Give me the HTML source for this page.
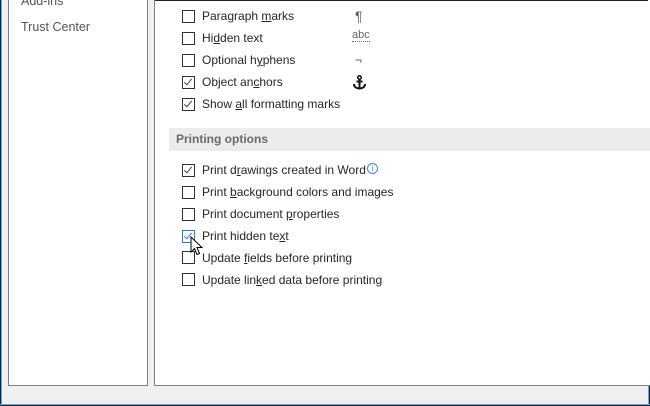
<!DOCTYPE html>
<html><head><style>
body{margin:0;width:650px;height:406px;overflow:hidden;background:#f0f0f0;position:relative;font-family:"Liberation Sans",sans-serif;font-size:12px;color:#262626}
.b{position:absolute}
.cb{position:absolute;left:182px;width:11px;height:11px;border:1px solid #333;background:#fff}
.cb.c::after{content:"";position:absolute;left:3px;top:0px;width:3px;height:7px;border:solid #444;border-width:0 1.3px 1.3px 0;transform:rotate(40deg)}
.cb.blue{border-color:#2a7fd4}
.cb.blue::after{border-color:#2a7fd4}
.t{position:absolute;left:202px;line-height:14px}
u{text-decoration:underline}
</style></head><body>
<div class="b" style="left:0;top:0;width:1px;height:406px;background:#222"></div>
<div class="b" style="left:1px;top:0;width:1px;height:405px;background:#5aaaf0"></div>
<div class="b" style="left:648px;top:0;width:1px;height:405px;background:#5aaaf0"></div>
<div class="b" style="left:649px;top:0;width:1px;height:406px;background:#222"></div>
<div class="b" style="left:0;top:404px;width:650px;height:1px;background:#5aaaf0"></div>
<div class="b" style="left:0;top:405px;width:650px;height:1px;background:#222"></div>
<div class="b" style="left:8px;top:-2px;width:138px;height:386px;background:#fff;border:1px solid #7a7f85"></div>
<div class="b" style="left:154px;top:-2px;width:500px;height:386px;background:#fff;border:1px solid #7a7f85"></div>
<div class="b" style="left:155px;top:0;width:493px;height:1px;background:#222"></div>
<div class="b" style="left:21px;top:-6px;color:#555;font-size:12.5px">Add-ins</div>
<div class="b" style="left:21px;top:20px;color:#555;font-size:12.5px">Trust Center</div>

<div class="cb" style="top:10px"></div><div class="t" style="top:9px">Paragraph <u>m</u>arks</div>
<div class="b" style="left:355px;top:8px;color:#666;font-size:14px">¶</div>
<div class="cb" style="top:32px"></div><div class="t" style="top:31px">Hi<u>d</u>den text</div>
<div class="b" style="left:352px;top:30px;color:#666;font-size:11px;border-bottom:1px dotted #666;line-height:11px">abc</div>
<div class="cb" style="top:54px"></div><div class="t" style="top:53px">Optional h<u>y</u>phens</div>
<div class="b" style="left:355px;top:53px;color:#555;font-size:12px">¬</div>
<div class="cb c" style="top:76px"></div><div class="t" style="top:75px">Object an<u>c</u>hors</div>
<svg class="b" style="left:353px;top:75px" width="13" height="15" viewBox="0 0 13 15"><circle cx="6.5" cy="2.5" r="1.8" fill="none" stroke="#111" stroke-width="1.5"/><path d="M6.5 4.3V13.5M3.5 6.5H9.5M1 9c0 3 2.5 4.5 5.5 4.5S12 12 12 9" fill="none" stroke="#111" stroke-width="2"/></svg>
<div class="cb c" style="top:98px"></div><div class="t" style="top:97px">Show <u>a</u>ll formatting marks</div>

<div class="b" style="left:169px;top:128px;width:481px;height:23px;background:#ececec"></div>
<div class="b" style="left:176px;top:132px;color:#6a6a6a;font-weight:bold;font-size:12px">Printing options</div>

<div class="cb c" style="top:164px"></div><div class="t" style="top:163px">Print d<u>r</u>awings created in Word</div>
<div class="b" style="left:367px;top:163px;width:9px;height:9px;border:1px solid #3b8ad8;border-radius:50%;color:#3b8ad8;font-size:8px;line-height:9px;text-align:center">i</div>
<div class="cb" style="top:186px"></div><div class="t" style="top:185px">Print <u>b</u>ackground colors and images</div>
<div class="cb" style="top:208px"></div><div class="t" style="top:207px">Print document <u>p</u>roperties</div>
<div class="cb c blue" style="top:230px"></div><div class="t" style="top:229px">Print hidden te<u>x</u>t</div>
<div class="cb" style="top:251px"></div><div class="t" style="top:251px">Update <u>f</u>ields before printing</div>
<div class="cb" style="top:273px"></div><div class="t" style="top:273px">Update lin<u>k</u>ed data before printing</div>
<svg class="b" style="left:190px;top:236px" width="14" height="22" viewBox="0 0 14 22"><path d="M1 1 L1 16 L4.5 12.5 L7 18.5 L9.5 17.5 L7 11.5 L12 11.5 Z" fill="#fff" stroke="#000" stroke-width="1"/></svg>
</body></html>
